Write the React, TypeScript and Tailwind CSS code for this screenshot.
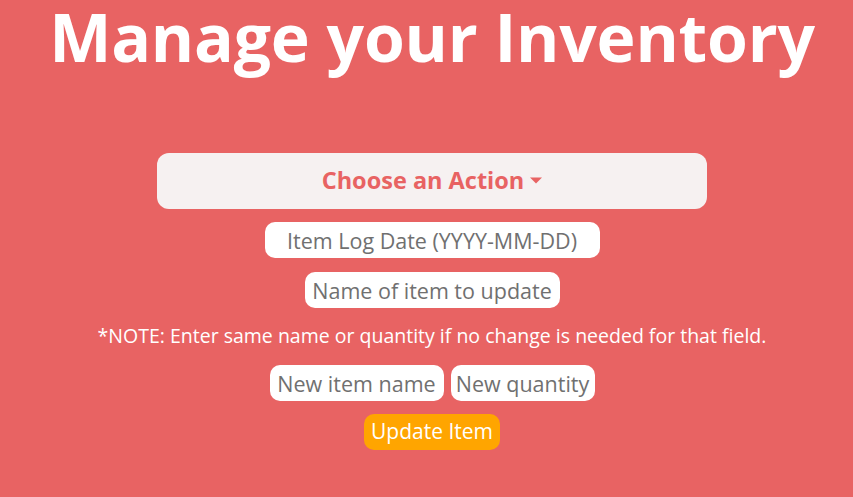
import React from "react";

export default function App() {
  const font = { fontFamily: '"Open Sans", "Noto Sans", sans-serif' };
  return (
    <div className="w-[853px] h-[497px] bg-[#e86363] pl-[11px] flex flex-col items-center overflow-hidden" style={font}>
      <h1 className="text-white font-bold text-[66px] leading-[72px] whitespace-nowrap tracking-[-0.2px]">Manage your Inventory</h1>
      <button className="mt-[81px] w-[550px] h-[56px] shrink-0 rounded-[12px] bg-[#f6f1f1] text-[#e86363] font-bold text-[23.5px] flex items-center justify-center gap-[6px]">
        <span>Choose an Action</span>
        <svg width="12" height="8" viewBox="0 0 12 8"><path d="M0 0.5 L12 0.5 L6 6.5 Z" fill="#e86363" /></svg>
      </button>
      <input
        placeholder="Item Log Date (YYYY-MM-DD)"
        className="mt-[13px] w-[335px] h-[36px] shrink-0 rounded-[10px] bg-white text-center text-[21.5px] placeholder:text-[#707070] outline-none"
      />
      <input
        placeholder="Name of item to update"
        className="mt-[14px] w-[255px] h-[36px] shrink-0 rounded-[10px] bg-white text-center text-[21.5px] placeholder:text-[#707070] outline-none"
      />
      <p className="mt-[15px] text-white text-[19.5px] leading-[26px] whitespace-nowrap">*NOTE: Enter same name or quantity if no change is needed for that field.</p>
      <div className="mt-[16px] flex gap-[7px]">
        <input
          placeholder="New item name"
          className="w-[174px] h-[36px] rounded-[10px] bg-white text-center text-[21.5px] placeholder:text-[#707070] outline-none"
        />
        <input
          placeholder="New quantity"
          className="w-[144px] h-[36px] rounded-[10px] bg-white text-center text-[21.5px] placeholder:text-[#707070] outline-none"
        />
      </div>
      <button className="mt-[13px] w-[136px] h-[36px] shrink-0 rounded-[10px] bg-[#ffa500] text-white text-[21px]">Update Item</button>
    </div>
  );
}
